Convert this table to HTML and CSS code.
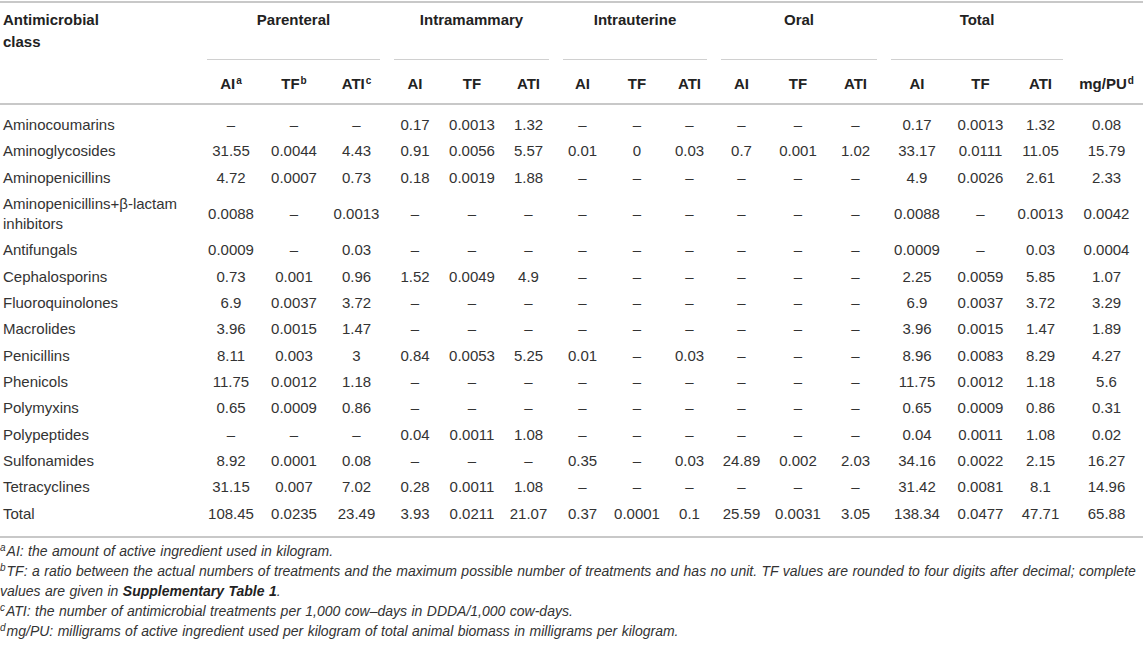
FILE: index.html
```html
<!DOCTYPE html>
<html lang="en">
<head>
<meta charset="utf-8">
<title>Antimicrobial use table</title>
<link rel="stylesheet" href="styles.css">
</head>
<body>
<table class="data">
  <colgroup>
    <col class="c-name">
    <col class="c-p-ai"><col class="c-p-tf"><col class="c-p-ati">
    <col class="c-im-ai"><col class="c-im-tf"><col class="c-im-ati">
    <col class="c-iu-ai"><col class="c-iu-tf"><col class="c-iu-ati">
    <col class="c-o-ai"><col class="c-o-tf"><col class="c-o-ati">
    <col class="c-t-ai"><col class="c-t-tf"><col class="c-t-ati">
    <col class="c-mg">
  </colgroup>
  <thead>
    <tr class="grp">
      <th class="name" rowspan="2">Antimicrobial<br>class</th>
      <th class="g" colspan="3"><div>Parenteral</div></th>
      <th class="g" colspan="3"><div>Intramammary</div></th>
      <th class="g" colspan="3"><div>Intrauterine</div></th>
      <th class="g" colspan="3"><div>Oral</div></th>
      <th class="g" colspan="3"><div>Total</div></th>
      <th class="mg" rowspan="2">mg/PU<sup>d</sup></th>
    </tr>
    <tr class="sub">
      <th>AI<sup>a</sup></th><th>TF<sup>b</sup></th><th>ATI<sup>c</sup></th>
      <th>AI</th><th>TF</th><th>ATI</th>
      <th>AI</th><th>TF</th><th>ATI</th>
      <th>AI</th><th>TF</th><th>ATI</th>
      <th>AI</th><th>TF</th><th>ATI</th>
    </tr>
  </thead>
  <tbody>
    <tr><td>Aminocoumarins</td><td>–</td><td>–</td><td>–</td><td>0.17</td><td>0.0013</td><td>1.32</td><td>–</td><td>–</td><td>–</td><td>–</td><td>–</td><td>–</td><td>0.17</td><td>0.0013</td><td>1.32</td><td>0.08</td></tr>
    <tr><td>Aminoglycosides</td><td>31.55</td><td>0.0044</td><td>4.43</td><td>0.91</td><td>0.0056</td><td>5.57</td><td>0.01</td><td>0</td><td>0.03</td><td>0.7</td><td>0.001</td><td>1.02</td><td>33.17</td><td>0.0111</td><td>11.05</td><td>15.79</td></tr>
    <tr><td>Aminopenicillins</td><td>4.72</td><td>0.0007</td><td>0.73</td><td>0.18</td><td>0.0019</td><td>1.88</td><td>–</td><td>–</td><td>–</td><td>–</td><td>–</td><td>–</td><td>4.9</td><td>0.0026</td><td>2.61</td><td>2.33</td></tr>
    <tr><td>Aminopenicillins+β-lactam<br>inhibitors</td><td>0.0088</td><td>–</td><td>0.0013</td><td>–</td><td>–</td><td>–</td><td>–</td><td>–</td><td>–</td><td>–</td><td>–</td><td>–</td><td>0.0088</td><td>–</td><td>0.0013</td><td>0.0042</td></tr>
    <tr><td>Antifungals</td><td>0.0009</td><td>–</td><td>0.03</td><td>–</td><td>–</td><td>–</td><td>–</td><td>–</td><td>–</td><td>–</td><td>–</td><td>–</td><td>0.0009</td><td>–</td><td>0.03</td><td>0.0004</td></tr>
    <tr><td>Cephalosporins</td><td>0.73</td><td>0.001</td><td>0.96</td><td>1.52</td><td>0.0049</td><td>4.9</td><td>–</td><td>–</td><td>–</td><td>–</td><td>–</td><td>–</td><td>2.25</td><td>0.0059</td><td>5.85</td><td>1.07</td></tr>
    <tr><td>Fluoroquinolones</td><td>6.9</td><td>0.0037</td><td>3.72</td><td>–</td><td>–</td><td>–</td><td>–</td><td>–</td><td>–</td><td>–</td><td>–</td><td>–</td><td>6.9</td><td>0.0037</td><td>3.72</td><td>3.29</td></tr>
    <tr><td>Macrolides</td><td>3.96</td><td>0.0015</td><td>1.47</td><td>–</td><td>–</td><td>–</td><td>–</td><td>–</td><td>–</td><td>–</td><td>–</td><td>–</td><td>3.96</td><td>0.0015</td><td>1.47</td><td>1.89</td></tr>
    <tr><td>Penicillins</td><td>8.11</td><td>0.003</td><td>3</td><td>0.84</td><td>0.0053</td><td>5.25</td><td>0.01</td><td>–</td><td>0.03</td><td>–</td><td>–</td><td>–</td><td>8.96</td><td>0.0083</td><td>8.29</td><td>4.27</td></tr>
    <tr><td>Phenicols</td><td>11.75</td><td>0.0012</td><td>1.18</td><td>–</td><td>–</td><td>–</td><td>–</td><td>–</td><td>–</td><td>–</td><td>–</td><td>–</td><td>11.75</td><td>0.0012</td><td>1.18</td><td>5.6</td></tr>
    <tr><td>Polymyxins</td><td>0.65</td><td>0.0009</td><td>0.86</td><td>–</td><td>–</td><td>–</td><td>–</td><td>–</td><td>–</td><td>–</td><td>–</td><td>–</td><td>0.65</td><td>0.0009</td><td>0.86</td><td>0.31</td></tr>
    <tr><td>Polypeptides</td><td>–</td><td>–</td><td>–</td><td>0.04</td><td>0.0011</td><td>1.08</td><td>–</td><td>–</td><td>–</td><td>–</td><td>–</td><td>–</td><td>0.04</td><td>0.0011</td><td>1.08</td><td>0.02</td></tr>
    <tr><td>Sulfonamides</td><td>8.92</td><td>0.0001</td><td>0.08</td><td>–</td><td>–</td><td>–</td><td>0.35</td><td>–</td><td>0.03</td><td>24.89</td><td>0.002</td><td>2.03</td><td>34.16</td><td>0.0022</td><td>2.15</td><td>16.27</td></tr>
    <tr><td>Tetracyclines</td><td>31.15</td><td>0.007</td><td>7.02</td><td>0.28</td><td>0.0011</td><td>1.08</td><td>–</td><td>–</td><td>–</td><td>–</td><td>–</td><td>–</td><td>31.42</td><td>0.0081</td><td>8.1</td><td>14.96</td></tr>
    <tr><td>Total</td><td>108.45</td><td>0.0235</td><td>23.49</td><td>3.93</td><td>0.0211</td><td>21.07</td><td>0.37</td><td>0.0001</td><td>0.1</td><td>25.59</td><td>0.0031</td><td>3.05</td><td>138.34</td><td>0.0477</td><td>47.71</td><td>65.88</td></tr>
  </tbody>
</table>
<div class="notes">
  <p><sup>a</sup>AI: the amount of active ingredient used in kilogram.</p>
  <p><sup>b</sup>TF: a ratio between the actual numbers of treatments and the maximum possible number of treatments and has no unit. TF values are rounded to four digits after decimal; complete values are given in <b>Supplementary Table 1</b>.</p>
  <p><sup>c</sup>ATI: the number of antimicrobial treatments per 1,000 cow–days in DDDA/1,000 cow-days.</p>
  <p><sup>d</sup>mg/PU: milligrams of active ingredient used per kilogram of total animal biomass in milligrams per kilogram.</p>
</div>
</body>
</html>
```
FILE: styles.css
```css
html, body {
  margin: 0;
  padding: 0;
  background: #ffffff;
}

body {
  font-family: "Liberation Sans", Arial, Helvetica, sans-serif;
  color: #333333;
}

.data {
  width: 1143px;
  table-layout: fixed;
  border-collapse: collapse;
  margin-top: 1px;
  border-top: 2px solid #c8c8c8;
  border-bottom: 2px solid #c8c8c8;
  font-size: 15px;
}

.c-name { width: 200px; }
.c-p-ai { width: 62px; }
.c-p-tf { width: 64px; }
.c-p-ati { width: 61px; }
.c-im-ai { width: 56px; }
.c-im-tf { width: 58px; }
.c-im-ati { width: 55px; }
.c-iu-ai { width: 53px; }
.c-iu-tf { width: 56px; }
.c-iu-ati { width: 49px; }
.c-o-ai { width: 55px; }
.c-o-tf { width: 58px; }
.c-o-ati { width: 57px; }
.c-t-ai { width: 66px; }
.c-t-tf { width: 61px; }
.c-t-ati { width: 59px; }
.c-mg { width: 73px; }

.data thead {
  border-bottom: 2px solid #c8c8c8;
}

.data th {
  font-weight: bold;
  color: #222222;
  line-height: 21px;
}

.data sup {
  font-size: 10px;
  line-height: 0;
  vertical-align: 5px;
  margin-left: 1px;
}

.grp th {
  padding: 6px 0 0;
  vertical-align: top;
}

.grp .name {
  text-align: left;
  padding-left: 3px;
  line-height: 22px;
}

.grp .g div {
  margin: 0 7px;
  padding-bottom: 29px;
  border-bottom: 1px solid #d0d0d0;
  text-align: center;
}

.grp .mg {
  vertical-align: bottom;
  text-align: center;
  padding: 0 0 9px;
}

.sub th {
  padding: 13px 0 9px;
  text-align: center;
}

.data td {
  padding: 3px 0 3.35px;
  line-height: 20px;
  text-align: center;
  white-space: nowrap;
}

.data td:first-child {
  text-align: left;
  padding-left: 3px;
}

.data tbody tr:first-child td {
  padding-top: 10px;
}

.data tbody tr:last-child td {
  padding-bottom: 12px;
}

.notes {
  margin-top: 3px;
  font-size: 14px;
  word-spacing: 0.55px;
  font-style: italic;
  line-height: 20px;
  color: #333333;
}

.notes p {
  margin: 0;
}

.notes sup {
  font-size: 10px;
  line-height: 0;
  vertical-align: 5px;
  margin-right: 1px;
}

.notes b {
  font-weight: bold;
  color: #222222;
}
```
